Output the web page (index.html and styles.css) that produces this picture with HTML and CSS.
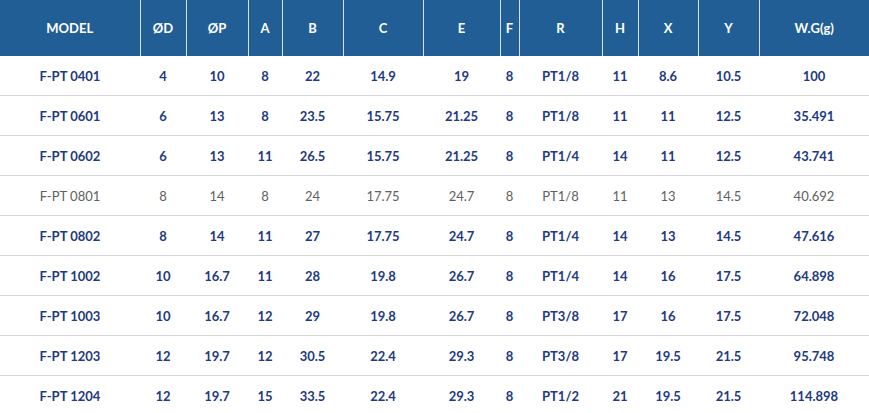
FILE: index.html
```html
<!DOCTYPE html>
<html>
<head>
<meta charset="utf-8">
<link rel="stylesheet" href="styles.css">
</head>
<body>
<table class="spec">
  <colgroup>
    <col class="c-model"><col class="c-d"><col class="c-p"><col class="c-a"><col class="c-b"><col class="c-c"><col class="c-e"><col class="c-f"><col class="c-r"><col class="c-h"><col class="c-x"><col class="c-y"><col class="c-wg">
  </colgroup>
  <thead>
    <tr><th>MODEL</th><th>ØD</th><th>ØP</th><th>A</th><th>B</th><th>C</th><th>E</th><th>F</th><th>R</th><th>H</th><th>X</th><th>Y</th><th>W.G(g)</th></tr>
  </thead>
  <tbody>
    <tr><td>F-PT 0401</td><td>4</td><td>10</td><td>8</td><td>22</td><td>14.9</td><td>19</td><td>8</td><td>PT1/8</td><td>11</td><td>8.6</td><td>10.5</td><td>100</td></tr>
    <tr><td>F-PT 0601</td><td>6</td><td>13</td><td>8</td><td>23.5</td><td>15.75</td><td>21.25</td><td>8</td><td>PT1/8</td><td>11</td><td>11</td><td>12.5</td><td>35.491</td></tr>
    <tr><td>F-PT 0602</td><td>6</td><td>13</td><td>11</td><td>26.5</td><td>15.75</td><td>21.25</td><td>8</td><td>PT1/4</td><td>14</td><td>11</td><td>12.5</td><td>43.741</td></tr>
    <tr class="muted"><td>F-PT 0801</td><td>8</td><td>14</td><td>8</td><td>24</td><td>17.75</td><td>24.7</td><td>8</td><td>PT1/8</td><td>11</td><td>13</td><td>14.5</td><td>40.692</td></tr>
    <tr><td>F-PT 0802</td><td>8</td><td>14</td><td>11</td><td>27</td><td>17.75</td><td>24.7</td><td>8</td><td>PT1/4</td><td>14</td><td>13</td><td>14.5</td><td>47.616</td></tr>
    <tr><td>F-PT 1002</td><td>10</td><td>16.7</td><td>11</td><td>28</td><td>19.8</td><td>26.7</td><td>8</td><td>PT1/4</td><td>14</td><td>16</td><td>17.5</td><td>64.898</td></tr>
    <tr><td>F-PT 1003</td><td>10</td><td>16.7</td><td>12</td><td>29</td><td>19.8</td><td>26.7</td><td>8</td><td>PT3/8</td><td>17</td><td>16</td><td>17.5</td><td>72.048</td></tr>
    <tr><td>F-PT 1203</td><td>12</td><td>19.7</td><td>12</td><td>30.5</td><td>22.4</td><td>29.3</td><td>8</td><td>PT3/8</td><td>17</td><td>19.5</td><td>21.5</td><td>95.748</td></tr>
    <tr><td>F-PT 1204</td><td>12</td><td>19.7</td><td>15</td><td>33.5</td><td>22.4</td><td>29.3</td><td>8</td><td>PT1/2</td><td>21</td><td>19.5</td><td>21.5</td><td>114.898</td></tr>
  </tbody>
</table>
</body>
</html>
```
FILE: styles.css
```css
html, body {
  margin: 0;
  padding: 0;
  background: #ffffff;
}
.spec {
  width: 869px;
  table-layout: fixed;
  border-collapse: collapse;
  font-family: Lato, "Open Sans", sans-serif;
  font-size: 13px;
  font-weight: 700;
  color: #22397f;
}
.c-model { width: 140px; }
.c-d { width: 46px; }
.c-p { width: 62px; }
.c-a { width: 34px; }
.c-b { width: 61px; }
.c-c { width: 80px; }
.c-e { width: 77px; }
.c-f { width: 19px; }
.c-r { width: 83px; }
.c-h { width: 36px; }
.c-x { width: 60px; }
.c-y { width: 61px; }
.c-wg { width: 110px; }
.spec th {
  height: 56px;
  padding: 0;
  background: #215e95;
  color: #ffffff;
  font-weight: 700;
  text-align: center;
  border-left: 1px solid #d7e2ee;
}
.spec th:first-child {
  border-left: none;
}
.spec td {
  height: 39px;
  padding: 0;
  text-align: center;
  border-bottom: 1px solid #d6d6d6;
  white-space: nowrap;
}
.spec tr.muted td {
  color: #606060;
  font-weight: 400;
}
```
